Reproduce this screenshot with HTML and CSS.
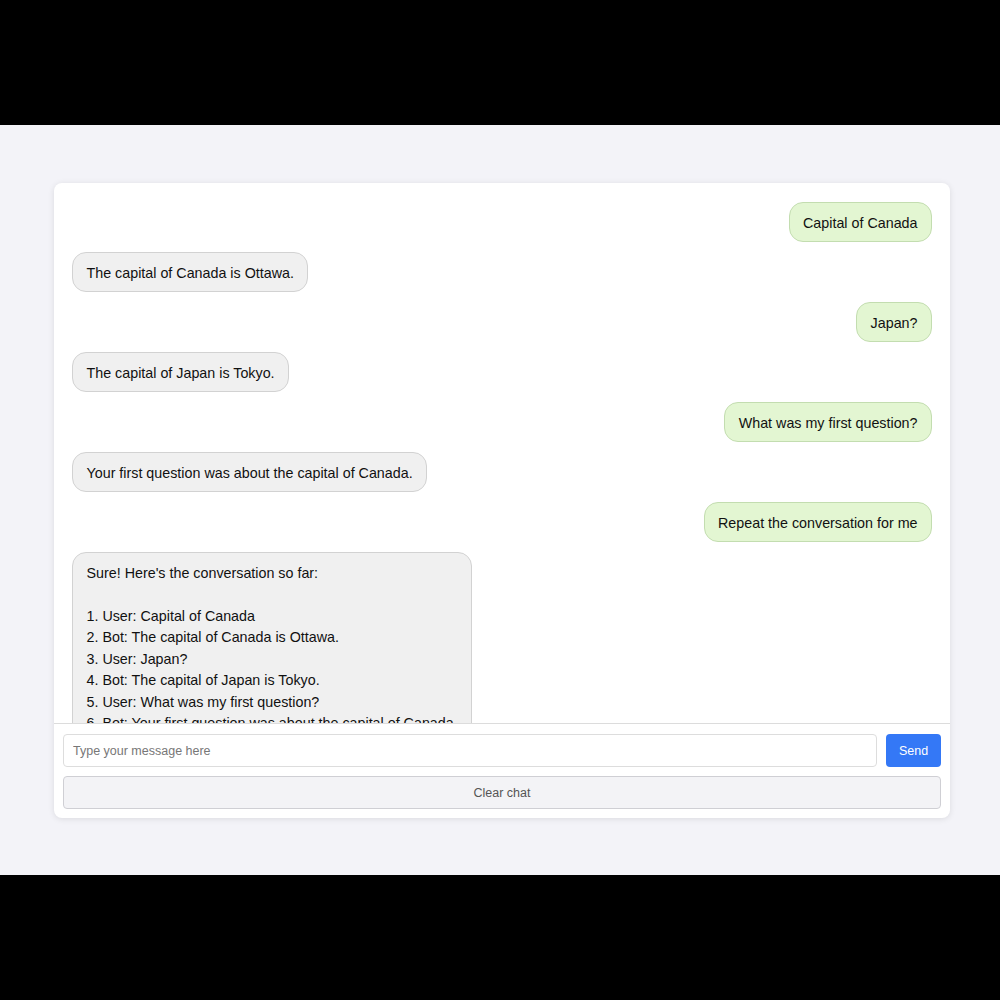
FILE: index.html
```html
<!DOCTYPE html>
<html lang="en">
<head>
  <meta charset="UTF-8">
  <title>Chat</title>
  <link rel="stylesheet" href="styles.css">
</head>
<body>
  <main class="screen">
    <section class="chat-card">
      <div class="chat-log" id="chatLog">
        <div class="msg msg-user">Capital of Canada</div>
        <div class="msg msg-bot">The capital of Canada is Ottawa.</div>
        <div class="msg msg-user">Japan?</div>
        <div class="msg msg-bot">The capital of Japan is Tokyo.</div>
        <div class="msg msg-user">What was my first question?</div>
        <div class="msg msg-bot">Your first question was about the capital of Canada.</div>
        <div class="msg msg-user">Repeat the conversation for me</div>
        <div class="msg msg-bot msg-long">Sure! Here's the conversation so far:

1. User: Capital of Canada
2. Bot: The capital of Canada is Ottawa.
3. User: Japan?
4. Bot: The capital of Japan is Tokyo.
5. User: What was my first question?
6. Bot: Your first question was about the capital of Canada.
7. User: Repeat the conversation for me</div>
      </div>
      <form class="chat-controls">
        <div class="send-row">
          <input type="text" class="msg-input" placeholder="Type your message here">
          <button type="submit" class="btn btn-send">Send</button>
        </div>
        <button type="button" class="btn btn-clear">Clear chat</button>
      </form>
    </section>
  </main>
</body>
</html>
```

FILE: styles.css
```css
/* Fondo negro arriba y abajo, zona central gris claro */
body {
  margin: 0;
  background: #000;
  font-family: "Liberation Sans", Arial, sans-serif;
  color: #000;
}
.screen {
  box-sizing: border-box;
  height: 750px;
  margin-top: 125px;
  padding: 58px 50px 57px 54px;
  background: #f3f3f8;
}
.chat-card {
  display: flex;
  flex-direction: column;
  height: 100%;
  background: #fff;
  border-radius: 8px;
  box-shadow: 0 1px 6px rgba(0, 0, 0, 0.1);
  overflow: hidden;
}
/* Historial de mensajes */
.chat-log {
  flex: 1;
  min-height: 0;
  overflow: hidden;
  display: flex;
  flex-direction: column;
  gap: 10px;
  padding: 19px 18px;
}
.msg {
  flex-shrink: 0;
  max-width: 372px;
  padding: 9.5px 13.5px 7px;
  border-radius: 14px;
  font-size: 14.3px;
  line-height: 21.5px;
  white-space: pre-wrap;
  color: #111;
}
.msg-user {
  align-self: flex-end;
  background: #e3f6d2;
  border: 1px solid #c3ddb0;
}
.msg-bot {
  align-self: flex-start;
  background: #f0f0f0;
  border: 1px solid #d2d2d2;
}
.msg-long {
  width: 371px;
  white-space: pre;
}
/* Zona de entrada */
.chat-controls {
  display: flex;
  flex-direction: column;
  gap: 9px;
  padding: 10px 9px 9px;
  border-top: 1px solid #dcdcdc;
}
.send-row {
  display: flex;
  gap: 9px;
}
.msg-input {
  flex: 1;
  box-sizing: border-box;
  height: 33px;
  padding: 0 9px;
  border: 1px solid #ddd;
  border-radius: 4px;
  font-family: inherit;
  font-size: 12.5px;
}
.msg-input::placeholder {
  color: #777;
}
.btn {
  box-sizing: border-box;
  height: 33px;
  border-radius: 4px;
  font-family: inherit;
  font-size: 12.5px;
  cursor: pointer;
}
.btn-send {
  width: 55px;
  border: none;
  background: #3478f6;
  color: #fff;
}
.btn-clear {
  width: 100%;
  border: 1px solid #cfcfd4;
  background: #f3f3f6;
  color: #555;
}
```
